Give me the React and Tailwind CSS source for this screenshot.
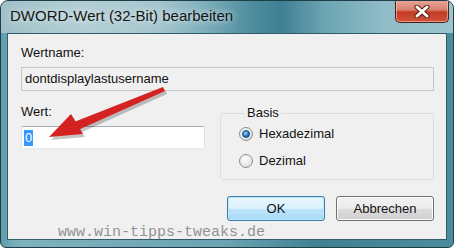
import React from "react";

const Radio = ({ checked, label }) => (
  <div className="flex items-center h-[16px]">
    <span className="relative w-[14px] h-[14px] rounded-full border border-[#8e8f8f] bg-[radial-gradient(circle_at_40%_35%,#ffffff,#e6e6e6_60%,#c8c8c8)] flex items-center justify-center">
      {checked && (
        <span className="w-[8px] h-[8px] rounded-full bg-[radial-gradient(circle_at_40%_35%,#9fd4ff,#2a78c0_55%,#0d3f78)] border border-[#11477e]" />
      )}
    </span>
    <span className="ml-[6px]">{label}</span>
  </div>
);

const VistaButton = ({ children, primary }) => (
  <button
    className={
      "w-[98px] h-[25px] rounded-[3px] border text-[13px] text-[#111] leading-none " +
      (primary
        ? "border-[#3c7fb1] bg-[linear-gradient(180deg,#eaf6fd_0%,#d9f0fc_50%,#bee6fd_50%,#a7d9f5_100%)] shadow-[inset_0_0_0_1px_#bfe5fb]"
        : "border-[#707070] bg-[linear-gradient(180deg,#f2f2f2_0%,#ebebeb_50%,#dddddd_50%,#cfcfcf_100%)] shadow-[inset_0_0_0_1px_#fcfcfc]")
    }
  >
    {children}
  </button>
);

export default function App() {
  return (
    <div className="w-[456px] h-[249px] bg-white font-['Liberation_Sans',Arial,sans-serif]">
      <div className="relative w-[454px] h-[248px] flex flex-col rounded-t-[8px] rounded-b-[6px] border border-[#1f3f48] bg-[linear-gradient(90deg,#5f9cab_0%,#7fb2bf_4%,#6aa3b1_50%,#3f8193_70%,#4b8c9d_100%)] overflow-hidden">
        {/* title bar */}
        <div className="h-[32px] flex justify-between bg-[linear-gradient(90deg,#9fc0c8_0%,#b3cfd5_18%,#a5c6ce_35%,#7eafbc_45%,#4f8d9e_55%,#3f8094_62%,#6ea6b4_72%,#90bcc7_85%,#9cc4cd_100%)]">
          <div className="pl-[9px] pt-[6px] text-[15px] leading-[18px] text-[#151515] [text-shadow:0_0_7px_rgba(255,255,255,0.95)]">
            DWORD-Wert (32-Bit) bearbeiten
          </div>
          <button className="-mt-[1px] mr-[4px] w-[54px] h-[23px] rounded-b-[5px] border border-t-0 border-[#4b2219] bg-[linear-gradient(180deg,#e9a89a_0%,#d9806d_45%,#c23a22_55%,#d0553b_100%)] shadow-[inset_0_0_0_1px_rgba(255,220,210,0.5)] flex items-center justify-center">
            <svg width="16" height="13" viewBox="0 0 16 13">
              <path d="M3 2 L13 11 M13 2 L3 11" stroke="#5a1a10" strokeWidth="5" strokeLinecap="round" />
              <path d="M3 2 L13 11 M13 2 L3 11" stroke="#ffffff" strokeWidth="3" strokeLinecap="round" />
            </svg>
          </button>
        </div>

        {/* client area */}
        <div className="mx-[6px] h-[207px] border border-[#2f5c68] bg-[#f0f0f0] flex flex-col pl-[13px] pr-[12px] pt-[11px] text-[13px] leading-[16px] text-[#111]">
          <div>Wertname:</div>
          <div className="mt-[6px] h-[24px] border border-[#c6c6c6] bg-[#f0f0f0] pl-[3px] flex items-center">
            dontdisplaylastusername
          </div>

          <div className="mt-[13px] flex">
            <div className="w-[184px] flex flex-col">
              <div>Wert:</div>
              <div className="mt-[6px] h-[23px] border border-[#abadb3] border-l-[#dbdfe6] border-r-[#dbdfe6] border-b-[#e3e9ef] bg-white rounded-[2px] pl-[2px] flex items-center">
                <span className="bg-[#3399ff] text-white px-[1px]">0</span>
              </div>
            </div>
            <fieldset className="ml-auto mt-[1px] w-[214px] border border-[#d5dfe5] rounded-[3px] pl-[18px] pt-[5px] pb-[10px]">
              <legend className="ml-[6px] px-[2px]">Basis</legend>
              <Radio checked label="Hexadezimal" />
              <div className="mt-[11px]">
                <Radio label="Dezimal" />
              </div>
            </fieldset>
          </div>

          <div className="mt-[16px] flex justify-end gap-[11px]">
            <VistaButton primary>OK</VistaButton>
            <VistaButton>Abbrechen</VistaButton>
          </div>
        </div>

        {/* watermark */}
        <div className="absolute left-[57px] top-[223px] text-[15px] leading-[17px] text-[#939393] font-['Liberation_Mono','Courier_New',monospace] pointer-events-none">
          www.win-tipps-tweaks.de
        </div>

        {/* red arrow */}
        <svg className="absolute left-0 top-0 pointer-events-none" width="454" height="248">
          <g transform="translate(2,3)" opacity="0.22">
            <polygon points="162,86 164,90 77,129 73,121" fill="#000" />
            <polygon points="48,136 70,113 82,133" fill="#000" />
          </g>
          <polygon points="162,86 164,90 77,129 73,121" fill="#d42222" />
          <polygon points="48,136 70,113 82,133" fill="#d42222" />
        </svg>
      </div>
    </div>
  );
}
